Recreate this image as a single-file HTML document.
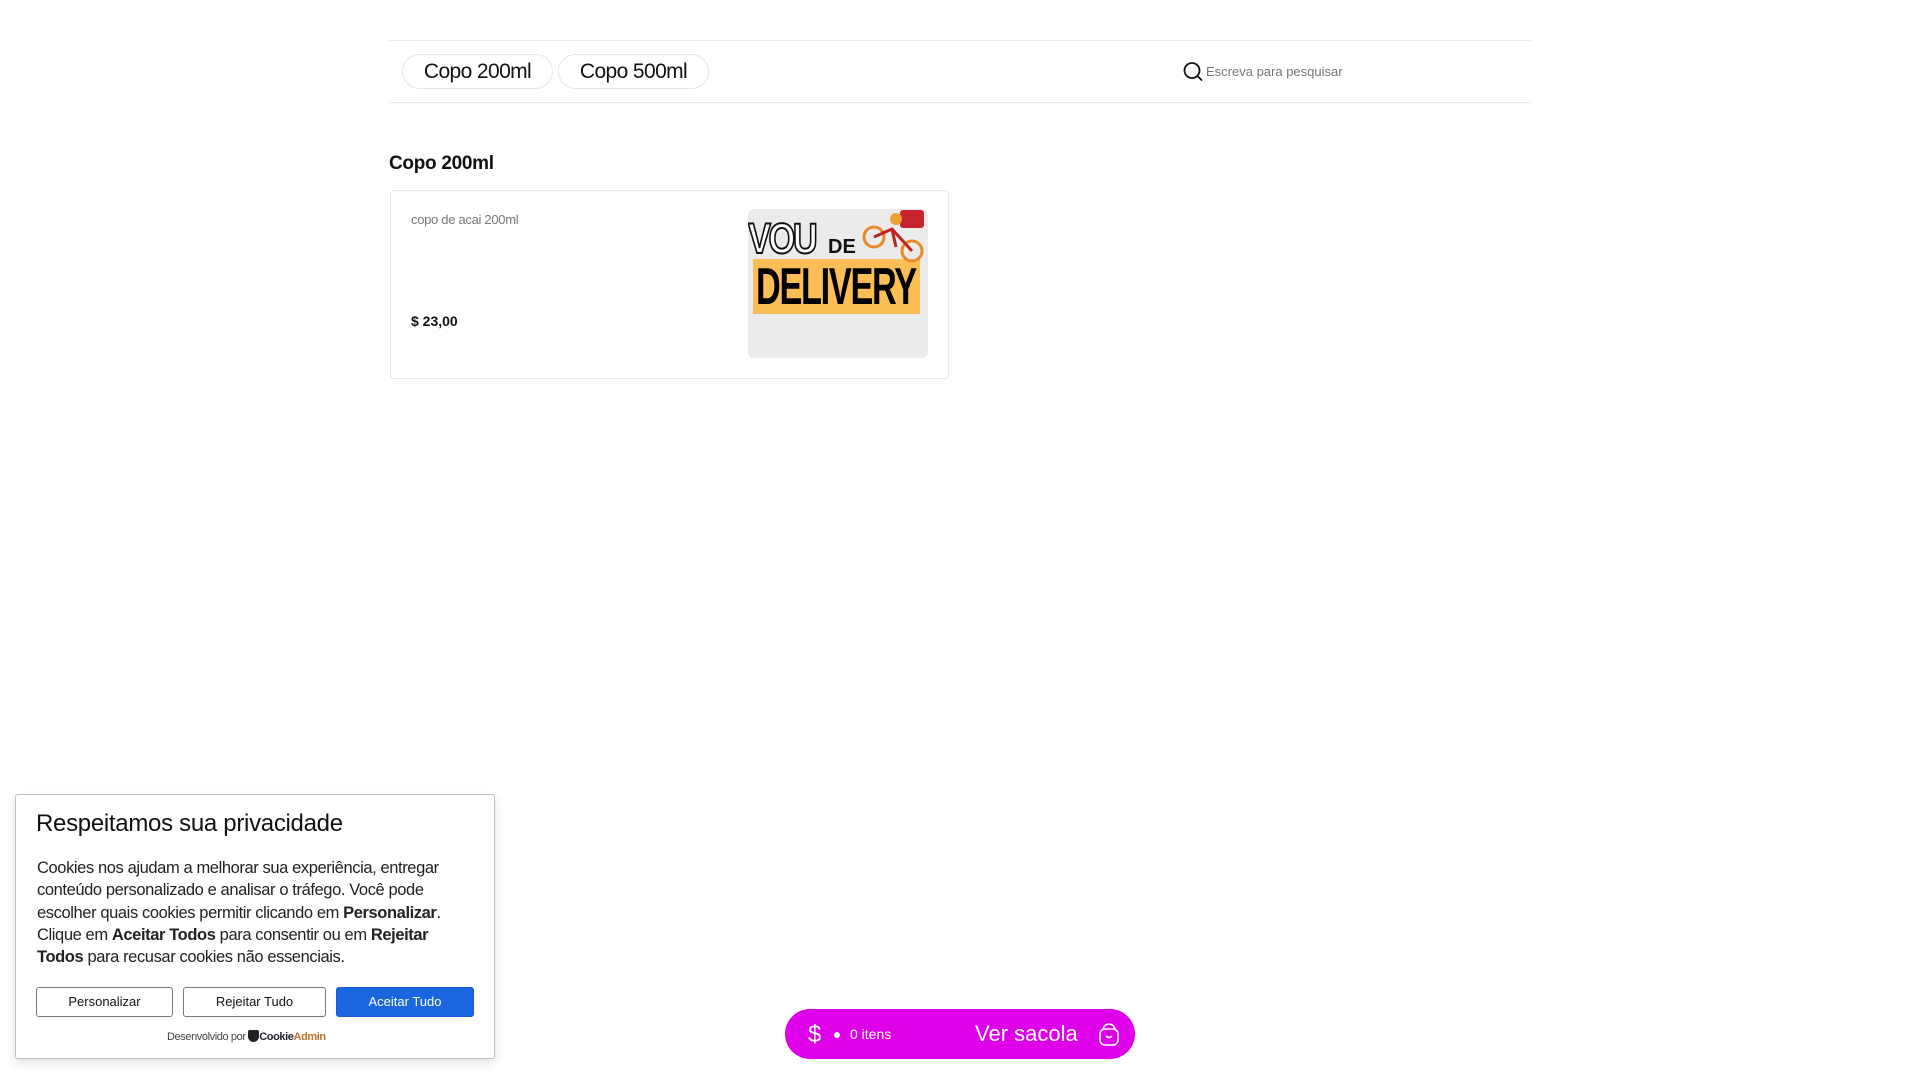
<!DOCTYPE html>
<html><head><meta charset="utf-8"><style>
*{box-sizing:border-box;margin:0;padding:0}
body{width:1920px;height:1080px;background:#fff;font-family:"Liberation Sans",sans-serif;color:#111;position:relative;overflow:hidden}
.abs{position:absolute}
.line{position:absolute;left:389px;width:1142px;height:1px;background:#e8e8e8}
.chip{position:absolute;top:54px;height:35px;border:1px solid #e6e6e6;border-radius:18px;font-size:21px;line-height:33px;text-align:center;color:#111;letter-spacing:-0.6px}
.btn{position:absolute;top:987px;height:30px;border:1px solid #777;border-radius:3px;font-size:13px;line-height:28px;text-align:center;background:#fff;color:#111}
</style></head><body>
<div class="line" style="top:40px"></div>
<div class="line" style="top:102px"></div>
<div class="chip" style="left:402px;width:151px">Copo 200ml</div>
<div class="chip" style="left:558px;width:151px">Copo 500ml</div>
<svg class="abs" style="left:1182px;top:61px" width="22" height="22" viewBox="0 0 22 22"><circle cx="10" cy="9.5" r="7.5" fill="none" stroke="#111" stroke-width="1.8"/><path d="M15.5 15l4 4" stroke="#111" stroke-width="1.8" stroke-linecap="round"/></svg>
<div class="abs" style="left:1206px;top:64px;font-size:13px;color:#777">Escreva para pesquisar</div>

<div class="abs" style="left:389px;top:153px;font-size:19px;font-weight:bold;letter-spacing:-0.3px">Copo 200ml</div>
<div class="abs" style="left:390px;top:190px;width:559px;height:189px;border:1px solid #e8e8e8;border-radius:4px"></div>
<div class="abs" style="left:411px;top:212px;font-size:13px;color:#777;letter-spacing:-0.3px">copo de acai 200ml</div>
<div class="abs" style="left:411px;top:313px;font-size:14px;font-weight:bold">$ 23,00</div>
<div class="abs" style="left:748px;top:209px;width:180px;height:149px;background:#ebebeb;border-radius:6px;overflow:hidden">
  <div class="abs" style="left:0;top:6px;font-size:43px;font-weight:bold;color:#fff;-webkit-text-stroke:2px #111;letter-spacing:-3px;transform:scaleX(0.8);transform-origin:left">VOU</div>
  <div class="abs" style="left:80px;top:27px;font-size:20px;font-weight:bold;color:#111">DE</div>
  <div class="abs" style="left:5px;top:50px;width:167px;height:55px;background:#fbbd55"></div>
  <div class="abs" style="left:8px;top:48px;font-size:52px;font-weight:bold;color:#000;letter-spacing:-2px;transform:scaleX(0.66);transform-origin:left">DELIVERY</div>
  <svg class="abs" style="left:112px;top:0" width="68" height="55" viewBox="0 0 68 55"><rect x="40" y="1" width="24" height="18" rx="3" fill="#c8242e"/><circle cx="14" cy="28" r="10" fill="none" stroke="#e88a2a" stroke-width="3"/><circle cx="52" cy="42" r="10" fill="none" stroke="#e88a2a" stroke-width="3"/><path d="M14 28l18-8 20 22M32 20l4 18" stroke="#b22" stroke-width="3" fill="none"/><circle cx="36" cy="10" r="6" fill="#f0a030"/></svg>
</div>

<div class="abs" style="left:15px;top:794px;width:480px;height:265px;border:1px solid #b8c0cc;border-radius:3px;background:#fff;box-shadow:0 4px 10px rgba(0,0,0,.12)"></div>
<div class="abs" style="left:36px;top:810px;font-size:24px;letter-spacing:-0.3px;color:#111">Respeitamos sua privacidade</div>
<div class="abs" style="left:37px;top:857px;width:420px;font-size:16.5px;line-height:22.3px;letter-spacing:-0.4px;color:#222">Cookies nos ajudam a melhorar sua experiência, entregar conteúdo personalizado e analisar o tráfego. Você pode escolher quais cookies permitir clicando em <b>Personalizar</b>. Clique em <b>Aceitar Todos</b> para consentir ou em <b>Rejeitar</b><br><b>Todos</b> para recusar cookies não essenciais.</div>
<div class="btn" style="left:36px;width:137px">Personalizar</div>
<div class="btn" style="left:183px;width:143px">Rejeitar Tudo</div>
<div class="btn" style="left:336px;width:138px;background:#1a66e0;border-color:#1a5ccc;color:#fff">Aceitar Tudo</div>
<div class="abs" style="left:167px;top:1030px;font-size:11px;color:#444;letter-spacing:-0.4px">Desenvolvido por <span style="display:inline-block;width:11px;height:12px;background:#222;border-radius:2px 2px 6px 6px;vertical-align:-2px"></span><b style="color:#223">Cookie</b><b style="color:#c0722a">Admin</b></div>

<div class="abs" style="left:785px;top:1009px;width:350px;height:50px;border-radius:25px;background:#de00e8;color:#fff">
  <div class="abs" style="left:23px;top:12px;font-size:24px">$</div>
  <div class="abs" style="left:49px;top:23px;width:6px;height:6px;border-radius:3px;background:#fff"></div>
  <div class="abs" style="left:65px;top:17px;font-size:14px">0 itens</div>
  <div class="abs" style="left:190px;top:12px;font-size:22px">Ver sacola</div>
  <svg class="abs" style="left:313px;top:12px" width="22" height="26" viewBox="0 0 22 26"><path d="M5 9a6 6 0 0 1 12 0" fill="none" stroke="#fff" stroke-width="1.6"/><rect x="2" y="8" width="18" height="16" rx="5" fill="none" stroke="#fff" stroke-width="1.6"/><path d="M8 15q3 3 6 0" fill="none" stroke="#fff" stroke-width="1.6"/></svg>
</div>
</body></html>
